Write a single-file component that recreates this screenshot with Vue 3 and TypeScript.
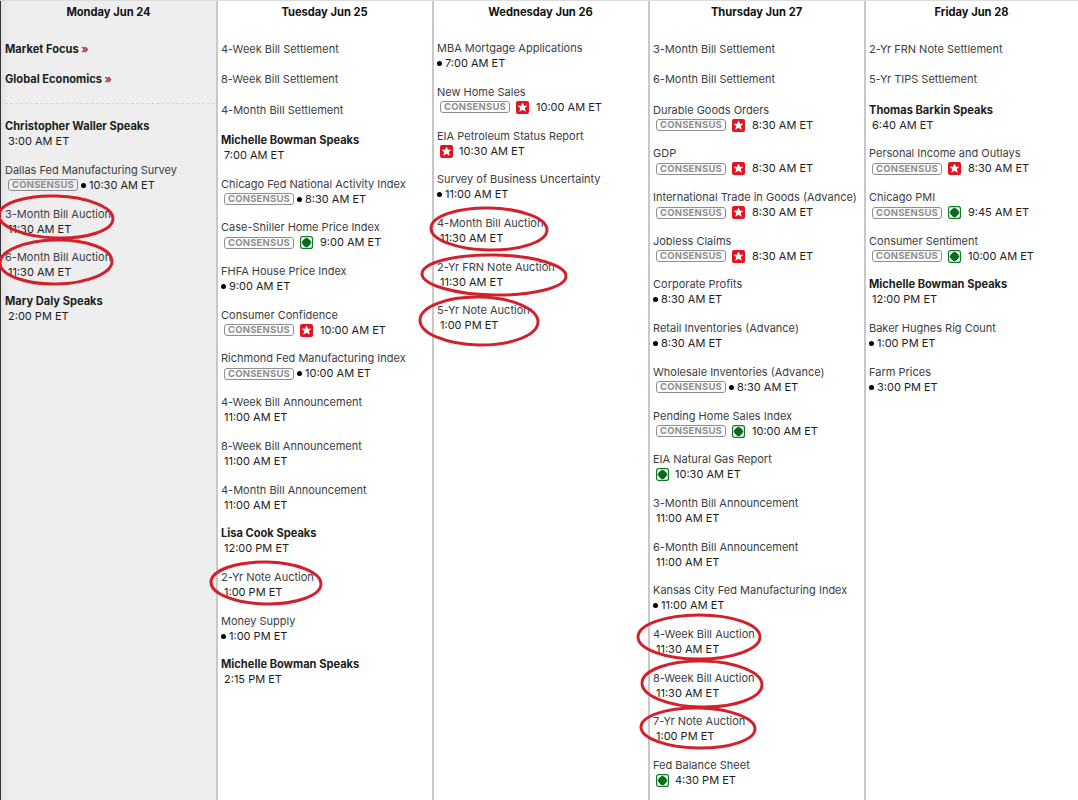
<script setup lang="ts">
type Icon = 'red' | 'green' | 'dot' | ''
interface Ev { title: string; time?: string; tag?: boolean; icon?: Icon; bold?: boolean; link?: boolean; tight?: boolean }
interface Col { day: string; shade?: boolean; cls?: string; events: Ev[]; early?: Ev[] }

const columns: Col[] = [
  {
    day: 'Monday Jun 24', shade: true,
    early: [
      { title: 'Market Focus', bold: true, link: true },
      { title: 'Global Economics', bold: true, link: true },
    ],
    events: [
      { title: 'Christopher Waller Speaks', time: '3:00 AM ET', bold: true },
      { title: 'Dallas Fed Manufacturing Survey', time: '10:30 AM ET', tag: true, icon: 'dot' },
      { title: '3-Month Bill Auction', time: '11:30 AM ET' },
      { title: '6-Month Bill Auction', time: '11:30 AM ET' },
      { title: 'Mary Daly Speaks', time: '2:00 PM ET', bold: true },
    ],
  },
  {
    day: 'Tuesday Jun 25',
    events: [
      { title: '4-Week Bill Settlement' },
      { title: '8-Week Bill Settlement' },
      { title: '4-Month Bill Settlement' },
      { title: 'Michelle Bowman Speaks', time: '7:00 AM ET', bold: true },
      { title: 'Chicago Fed National Activity Index', time: '8:30 AM ET', tag: true, icon: 'dot' },
      { title: 'Case-Shiller Home Price Index', time: '9:00 AM ET', tag: true, icon: 'green' },
      { title: 'FHFA House Price Index', time: '9:00 AM ET', icon: 'dot' },
      { title: 'Consumer Confidence', time: '10:00 AM ET', tag: true, icon: 'red' },
      { title: 'Richmond Fed Manufacturing Index', time: '10:00 AM ET', tag: true, icon: 'dot' },
      { title: '4-Week Bill Announcement', time: '11:00 AM ET' },
      { title: '8-Week Bill Announcement', time: '11:00 AM ET' },
      { title: '4-Month Bill Announcement', time: '11:00 AM ET' },
      { title: 'Lisa Cook Speaks', time: '12:00 PM ET', bold: true },
      { title: '2-Yr Note Auction', time: '1:00 PM ET' },
      { title: 'Money Supply', time: '1:00 PM ET', icon: 'dot' },
      { title: 'Michelle Bowman Speaks', time: '2:15 PM ET', bold: true },
    ],
  },
  {
    day: 'Wednesday Jun 26', cls: 'raised',
    events: [
      { title: 'MBA Mortgage Applications', time: '7:00 AM ET', icon: 'dot' },
      { title: 'New Home Sales', time: '10:00 AM ET', tag: true, icon: 'red' },
      { title: 'EIA Petroleum Status Report', time: '10:30 AM ET', icon: 'red' },
      { title: 'Survey of Business Uncertainty', time: '11:00 AM ET', icon: 'dot' },
      { title: '4-Month Bill Auction', time: '11:30 AM ET' },
      { title: '2-Yr FRN Note Auction', time: '11:30 AM ET' },
      { title: '5-Yr Note Auction', time: '1:00 PM ET' },
    ],
  },
  {
    day: 'Thursday Jun 27',
    events: [
      { title: '3-Month Bill Settlement' },
      { title: '6-Month Bill Settlement' },
      { title: 'Durable Goods Orders', time: '8:30 AM ET', tag: true, icon: 'red' },
      { title: 'GDP', time: '8:30 AM ET', tag: true, icon: 'red' },
      { title: 'International Trade in Goods (Advance)', time: '8:30 AM ET', tag: true, icon: 'red' },
      { title: 'Jobless Claims', time: '8:30 AM ET', tag: true, icon: 'red' },
      { title: 'Corporate Profits', time: '8:30 AM ET', icon: 'dot' },
      { title: 'Retail Inventories (Advance)', time: '8:30 AM ET', icon: 'dot' },
      { title: 'Wholesale Inventories (Advance)', time: '8:30 AM ET', tag: true, icon: 'dot' },
      { title: 'Pending Home Sales Index', time: '10:00 AM ET', tag: true, icon: 'green' },
      { title: 'EIA Natural Gas Report', time: '10:30 AM ET', icon: 'green' },
      { title: '3-Month Bill Announcement', time: '11:00 AM ET' },
      { title: '6-Month Bill Announcement', time: '11:00 AM ET' },
      { title: 'Kansas City Fed Manufacturing Index', time: '11:00 AM ET', icon: 'dot' },
      { title: '4-Week Bill Auction', time: '11:30 AM ET' },
      { title: '8-Week Bill Auction', time: '11:30 AM ET' },
      { title: '7-Yr Note Auction', time: '1:00 PM ET' },
      { title: 'Fed Balance Sheet', time: '4:30 PM ET', icon: 'green' },
    ],
  },
  {
    day: 'Friday Jun 28',
    events: [
      { title: '2-Yr FRN Note Settlement' },
      { title: '5-Yr TIPS Settlement' },
      { title: 'Thomas Barkin Speaks', time: '6:40 AM ET', bold: true },
      { title: 'Personal Income and Outlays', time: '8:30 AM ET', tag: true, icon: 'red' },
      { title: 'Chicago PMI', time: '9:45 AM ET', tag: true, icon: 'green' },
      { title: 'Consumer Sentiment', time: '10:00 AM ET', tag: true, icon: 'green' },
      { title: 'Michelle Bowman Speaks', time: '12:00 PM ET', bold: true },
      { title: 'Baker Hughes Rig Count', time: '1:00 PM ET', icon: 'dot' },
      { title: 'Farm Prices', time: '3:00 PM ET', icon: 'dot' },
    ],
  },
]

const rings = [
  { cx: 56, cy: 217, rx: 57, ry: 21, r: 2 },
  { cx: 56, cy: 262, rx: 56, ry: 22, r: -1 },
  { cx: 266, cy: 583, rx: 55, ry: 21, r: 1 },
  { cx: 489, cy: 229, rx: 58, ry: 21, r: 1 },
  { cx: 494, cy: 275, rx: 72, ry: 20, r: 1 },
  { cx: 479, cy: 321, rx: 59, ry: 24, r: 1 },
  { cx: 699, cy: 637, rx: 61, ry: 22, r: 0 },
  { cx: 702, cy: 684, rx: 60, ry: 23, r: 1 },
  { cx: 698, cy: 728, rx: 57, ry: 20, r: 1 },
]
</script>

<template>
  <div class="calendar">
    <section v-for="col in columns" :key="col.day" class="column" :class="[{ shade: col.shade }, col.cls]">
      <h3 class="day">{{ col.day }}</h3>
      <div v-if="col.early" class="early">
        <div v-for="e in col.early" :key="e.title" class="event single">
          <div class="title bold">{{ e.title }} <span class="more">»</span></div>
        </div>
      </div>
      <div class="list">
        <div v-for="(e, i) in col.events" :key="i" class="event" :class="{ single: !e.time }">
          <div class="title" :class="{ bold: e.bold }">{{ e.title }}</div>
          <div v-if="e.time" class="time">
            <span v-if="e.tag" class="tag">CONSENSUS</span>
            <span v-if="e.icon === 'dot'" class="dot"></span>
            <svg v-if="e.icon === 'red'" class="icon" viewBox="0 0 13 13">
              <rect width="13" height="13" rx="2" fill="#e4131f" />
              <path d="M6.5 1.500l1.500 3.200h3.500L8.800 7l.9 3.700-3.200-1.900-3.200 1.900.9-3.700L1.500 4.700H5z" fill="#fff" />
            </svg>
            <svg v-if="e.icon === 'green'" class="icon" viewBox="0 0 13 13">
              <rect x=".6" y=".6" width="11.8" height="11.8" rx="2" fill="#fff" stroke="#0b7a22" stroke-width="1.2" />
              <path d="M6.500 1.800l2 .9 1.800 1.800.9 2-.9 2-1.800 1.800-2 .9-2-.9-1.800-1.800-.9-2 .9-2 1.800-1.800z" fill="#0b6a1e" />
            </svg>
            <span class="clock">{{ e.time }}</span>
          </div>
        </div>
      </div>
    </section>
    <svg class="rings" width="1078" height="800" viewBox="0 0 1078 800">
      <ellipse
        v-for="r in rings"
        :key="r.cx + '-' + r.cy"
        :cx="r.cx"
        :cy="r.cy"
        :rx="r.rx"
        :ry="r.ry"
        :transform="`rotate(${r.r} ${r.cx} ${r.cy})`"
        fill="none"
        stroke="#d3202d"
        stroke-width="3"
      />
    </svg>
  </div>
</template>

<style scoped>
.calendar {
  position: relative;
  display: grid;
  grid-template-columns: 218px repeat(3, 216px) 1fr;
  width: 1078px;
  height: 800px;
  overflow: hidden;
  background: #fff;
  border-top: 1px solid #ddd;
  box-sizing: border-box;
  font-family: "Inter", "Liberation Sans", sans-serif;
  font-size: 11px;
  line-height: 15px;
  color: #3a3d42;
}
.column {
  box-sizing: border-box;
  border-right: 2px solid #c8c8c8;
  padding: 0 0 0 3px;
  min-width: 0;
}
.column:first-child {
  border-left: 1px solid #333;
  padding-left: 4px;
  background-image: linear-gradient(to right, #e2e2e2, #eeeeee 8px);
}
.column:last-of-type {
  border-right: 0;
}
.shade {
  background-color: #eeeeee;
}
.day {
  margin: 4px 0 0;
  padding-right: 4px;
  height: 37.050px;
  text-align: center;
  font-size: 11.150px;
  font-weight: 700;
  line-height: 15px;
  color: #111;
}
.raised .day {
  height: 36.300px;
}
.early {
  border-bottom: 1px dashed #d8d8d8;
  margin-right: 1px;
  margin-bottom: 15.500px;
}
.early .event {
  margin-bottom: 14.800px;
}
.event {
  margin-bottom: 13.700px;
}
.event.single {
  margin-bottom: 15.330px;
}
.title {
  white-space: nowrap;
}
.bold {
  font-size: 11.100px;
  font-weight: 700;
  color: #1c1e21;
}
.more {
  color: #b3271e;
}
.time {
  display: flex;
  align-items: center;
  height: 15px;
  padding-left: 3px;
  white-space: nowrap;
  color: #1d1d1d;
}
.tag {
  box-sizing: border-box;
  flex: none;
  width: 70px;
  height: 12px;
  margin-right: 3px;
  border: 1px solid #8e8e8e;
  border-radius: 3px;
  text-align: center;
  font-size: 9.500px;
  font-weight: 700;
  line-height: 10px;
  letter-spacing: 0.2px;
  color: #8e8e8e;
}
.dot {
  flex: none;
  width: 5px;
  height: 5px;
  margin: 0 3px 0 -3px;
  border-radius: 50%;
  background: #000;
}
.tag + .dot {
  margin-left: 0;
}
.icon {
  flex: none;
  width: 13px;
  height: 13px;
  margin: 0 6px 0 0;
}
.tag + .icon {
  margin-left: 3px;
  margin-right: 7px;
}
.rings {
  position: absolute;
  top: -1px;
  left: 0;
  pointer-events: none;
}
</style>
